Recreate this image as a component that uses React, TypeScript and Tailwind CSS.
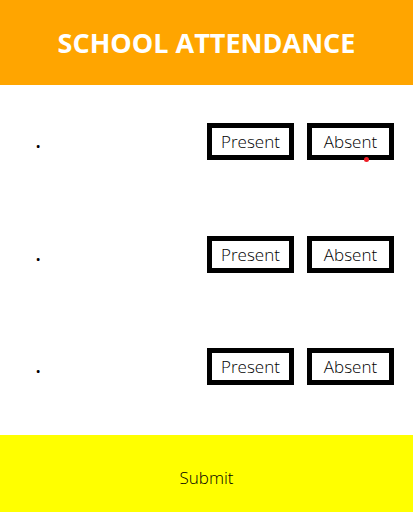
import React from "react";

const students = [
  { id: 1, name: "." },
  { id: 2, name: "." },
  { id: 3, name: "." },
];

function MarkButton({ label, flagged = false }: { label: string; flagged?: boolean }) {
  return (
    <button
      type="button"
      className="relative h-[37px] w-[87px] border-[5px] border-black bg-white text-center text-[17px] leading-7 font-light text-black"
    >
      {label}
      {flagged && (
        <span className="absolute right-5 -bottom-[7px] size-[5px] rounded-full bg-[#ed1c24]" />
      )}
    </button>
  );
}

export default function App() {
  return (
    <div className="flex min-h-screen flex-col bg-white font-['Open_Sans','Noto_Sans',sans-serif] text-black">
      <header className="bg-[#ffa500] px-4 pt-[25px] pb-6 text-center">
        <h1 className="text-[27px] leading-9 font-bold text-white">SCHOOL ATTENDANCE</h1>
      </header>
      <main className="flex flex-1 flex-col">
        <ul className="flex flex-1 flex-col justify-between pt-[38px] pr-[19px] pb-[50px] pl-[35px]">
          {students.map((student) => (
            <li key={student.id} className="flex items-start justify-between">
              <span className="text-2xl leading-8">{student.name}</span>
              <div className="flex gap-[13px]">
                <MarkButton label="Present" />
                <MarkButton label="Absent" flagged={student.id === 1} />
              </div>
            </li>
          ))}
        </ul>
      </main>
      <button
        type="submit"
        className="h-[77px] w-full bg-[#ffff00] pt-2 text-center text-[17px] leading-7 font-light text-black"
      >
        Submit
      </button>
    </div>
  );
}
